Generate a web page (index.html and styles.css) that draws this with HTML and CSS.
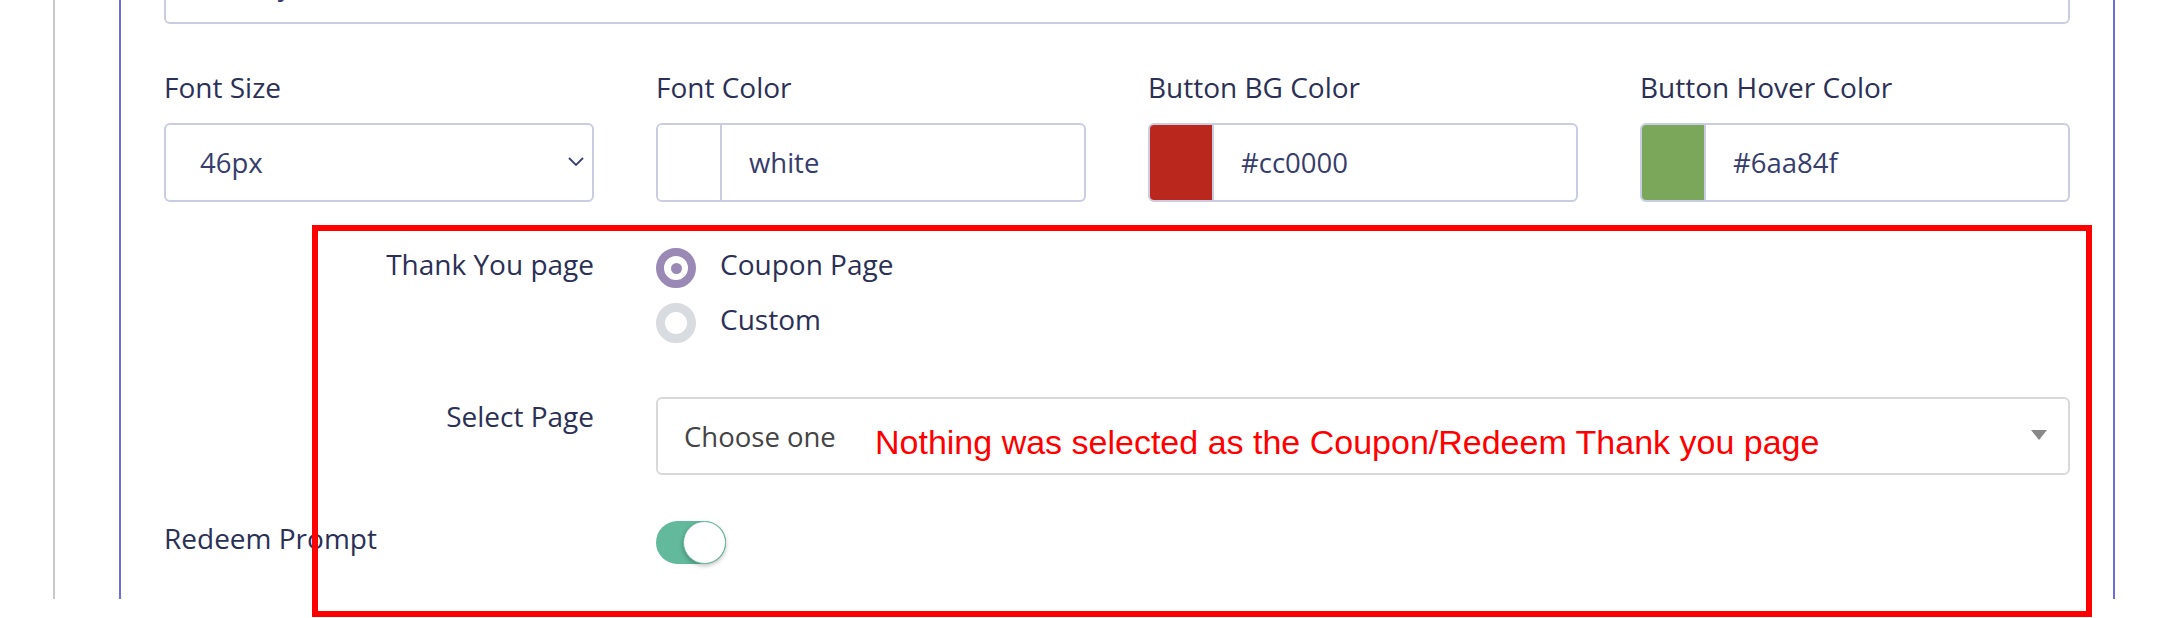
FILE: index.html
```html
<!DOCTYPE html>
<html lang="en">
<head>
<meta charset="utf-8">
<title>Settings</title>
<link rel="stylesheet" href="styles.css">
</head>
<body>
<div class="page">
  <div class="card">
    <div class="input top-input"><span class="val-plain">Get my reward</span></div>

    <div class="grid4">
      <div class="field">
        <label class="label">Font Size</label>
        <div class="input select">
          <span>46px</span>
          <svg class="chev" width="16" height="9" viewBox="0 0 16 9"><path d="M1 1 L8 8 L15 1" fill="none" stroke="#3a406e" stroke-width="1.8"/></svg>
        </div>
      </div>
      <div class="field">
        <label class="label">Font Color</label>
        <div class="input color">
          <span class="swatch" style="background:#ffffff"></span>
          <span class="val">white</span>
        </div>
      </div>
      <div class="field">
        <label class="label">Button BG Color</label>
        <div class="input color">
          <span class="swatch" style="background:#ba271d"></span>
          <span class="val">#cc0000</span>
        </div>
      </div>
      <div class="field">
        <label class="label">Button Hover Color</label>
        <div class="input color">
          <span class="swatch" style="background:#7aa75a"></span>
          <span class="val">#6aa84f</span>
        </div>
      </div>
    </div>

    <div class="hrow thank">
      <div class="hlabel">Thank You page</div>
      <div class="radios">
        <div class="radio-opt"><span class="radio checked"></span><span>Coupon Page</span></div>
        <div class="radio-opt"><span class="radio"></span><span>Custom</span></div>
      </div>
    </div>

    <div class="hrow select-row">
      <div class="hlabel">Select Page</div>
      <div class="select2"><span>Choose one</span><span class="tri"></span></div>
    </div>

    <div class="hrow redeem">
      <div class="hlabel left">Redeem Prompt</div>
      <div class="toggle-cell"><div class="toggle"><span class="knob"></span></div></div>
    </div>
  </div>
</div>

<div class="annot-box"></div>
<div class="annot-text">Nothing was selected as the Coupon/Redeem Thank you page</div>
</body>
</html>
```

FILE: styles.css
```css
html, body {
  margin: 0;
  padding: 0;
  background: #ffffff;
  overflow: hidden;
}

body {
  font-family: "Open Sans", "Noto Sans", sans-serif;
  width: 2170px;
  height: 618px;
  position: relative;
}

.page {
  height: 599px;
  margin-left: 53px;
  border-left: 2px solid #c9c9c9;
  padding-left: 64px;
  box-sizing: border-box;
}

.card {
  width: 1996px;
  height: 599px;
  box-sizing: border-box;
  border-left: 2px solid #6b6fdc;
  border-right: 2px solid #6b6fdc;
  padding: 0 43px;
  display: flex;
  flex-direction: column;
}

.input {
  height: 79px;
  box-sizing: border-box;
  border: 2px solid #c9cce3;
  border-radius: 6px;
  display: flex;
  align-items: center;
  font-size: 27.5px;
  color: #363d6c;
  background: #fff;
  overflow: hidden;
}

.top-input {
  margin-top: -55px;
  padding-left: 34px;
  flex: none;
}

.grid4 {
  display: grid;
  grid-template-columns: repeat(4, 1fr);
  column-gap: 62px;
  margin-top: 44px;
}

.label {
  display: block;
  font-size: 28px;
  line-height: 38px;
  color: #2b3056;
  margin-bottom: 17px;
}

.select {
  justify-content: space-between;
  padding: 0 8px 0 34px;
}

.chev {
  display: block;
  margin-top: -2px;
}

.color .swatch {
  width: 62px;
  align-self: stretch;
  border-right: 2px solid #c9cce3;
  flex: none;
}

.color .val {
  padding-left: 27px;
}

.hrow {
  display: grid;
  grid-template-columns: 430px 1fr;
  column-gap: 62px;
}

.hlabel {
  text-align: right;
  font-size: 28px;
  line-height: 38px;
  color: #2b3056;
}

.hlabel.left {
  text-align: left;
}

.thank {
  margin-top: 43px;
}

.radios {
  display: flex;
  flex-direction: column;
  gap: 12px;
}

.radio-opt {
  display: flex;
  align-items: flex-start;
  gap: 24px;
  height: 43px;
  font-size: 28px;
  line-height: 38px;
  color: #2b3056;
}

.radio {
  width: 40px;
  height: 40px;
  margin-top: 3px;
  box-sizing: border-box;
  border-radius: 50%;
  border: 9px solid #d8dbdf;
  background: #fff;
  display: flex;
  align-items: center;
  justify-content: center;
  flex: none;
}

.radio.checked {
  border: 8.5px solid #9a89b4;
}

.radio.checked::after {
  content: "";
  width: 11px;
  height: 11px;
  border-radius: 50%;
  background: #9a89b4;
}

.select-row {
  margin-top: 54px;
}

.select2 {
  height: 78px;
  box-sizing: border-box;
  border: 2px solid #d9d9d9;
  border-radius: 6px;
  display: flex;
  align-items: center;
  justify-content: space-between;
  padding: 0 21px 0 26px;
  font-size: 27.5px;
  color: #444444;
}

.tri {
  width: 0;
  height: 0;
  border-left: 8px solid transparent;
  border-right: 8px solid transparent;
  border-top: 10px solid #888888;
  margin-top: -2px;
}

.redeem {
  margin-top: 44px;
}

.toggle-cell {
  padding-top: 2px;
}

.toggle {
  width: 70px;
  height: 43px;
  border-radius: 22px;
  background: #62b99c;
  display: flex;
  justify-content: flex-end;
}

.knob {
  width: 43px;
  height: 43px;
  box-sizing: border-box;
  border-radius: 50%;
  background: #ffffff;
  border: 1px solid #62b99c;
  box-shadow: 0 2px 4px rgba(0, 0, 0, 0.25);
}

.annot-box {
  position: absolute;
  left: 312px;
  top: 225px;
  width: 1780px;
  height: 392px;
  box-sizing: border-box;
  border: 6px solid #ff0000;
}

.annot-text {
  position: absolute;
  left: 875px;
  top: 425px;
  font-family: "Liberation Sans", Arial, sans-serif;
  font-size: 34px;
  line-height: 34px;
  color: #ff0000;
  white-space: nowrap;
}
```
